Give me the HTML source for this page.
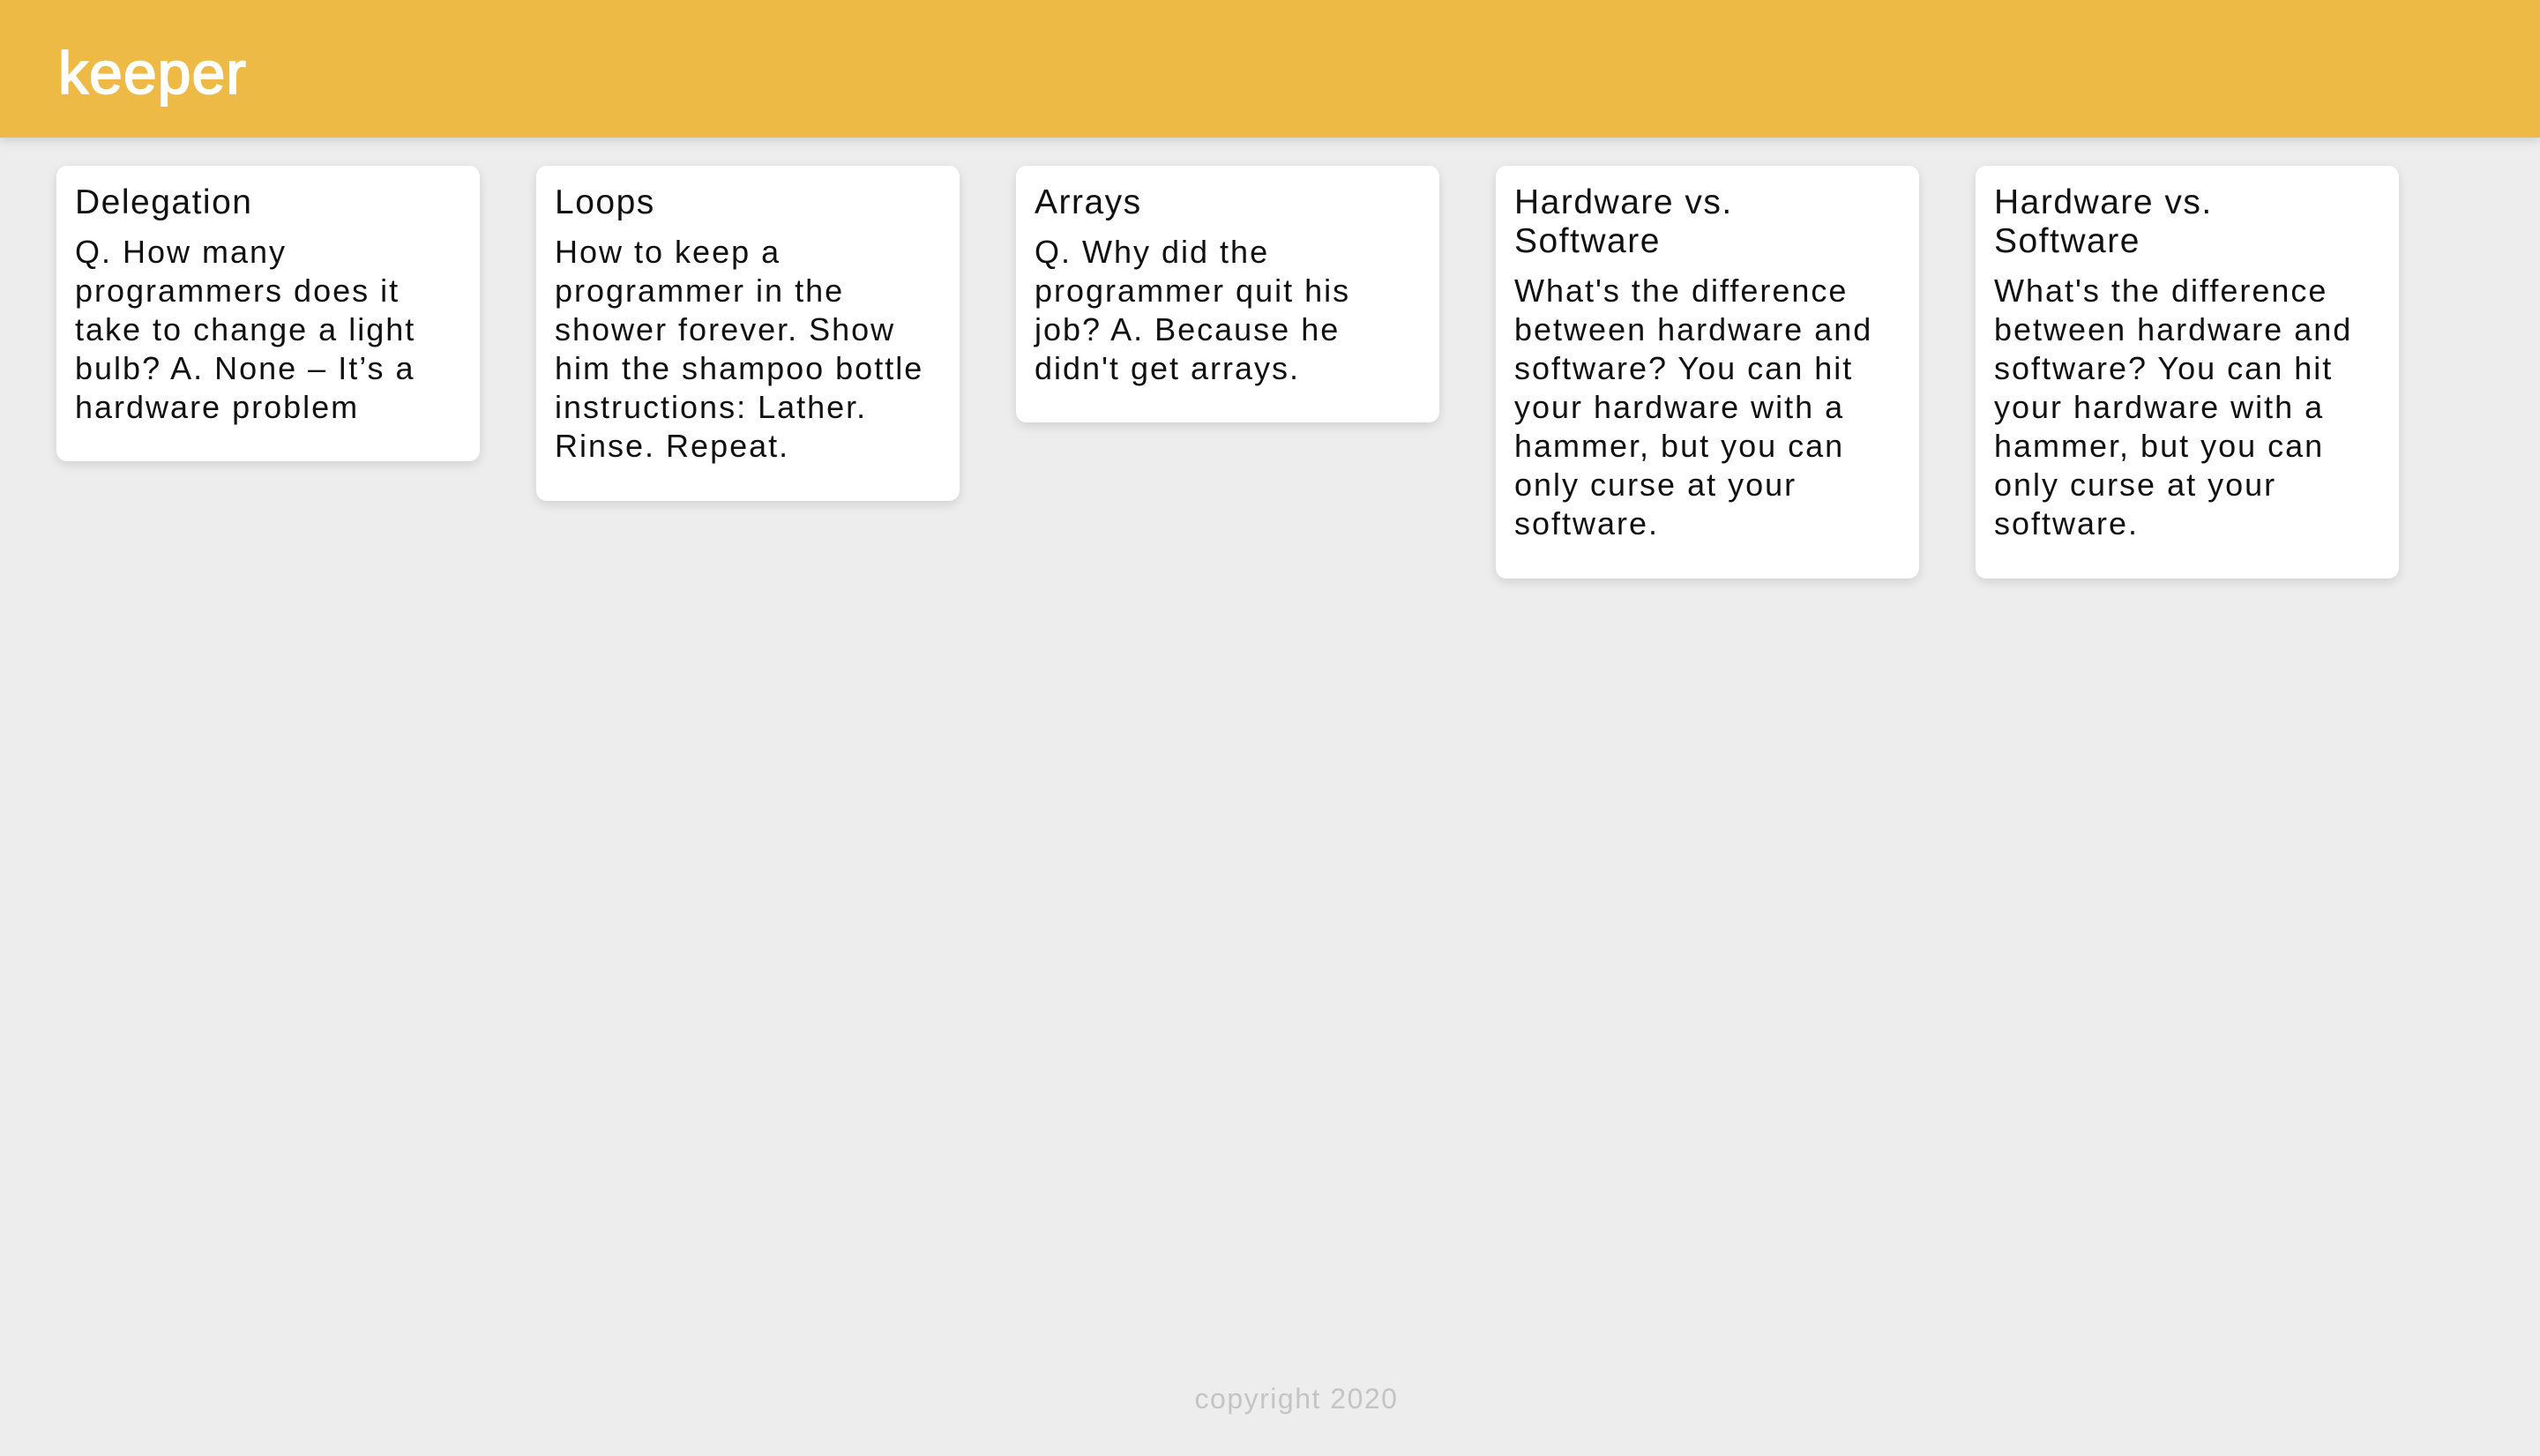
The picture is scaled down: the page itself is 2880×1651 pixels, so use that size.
<!DOCTYPE html>
<html><head><meta charset="utf-8"><style>
html,body{margin:0;padding:0}
body{width:2880px;height:1651px;background:#ededed;font-family:"Liberation Sans",sans-serif;position:relative;overflow:hidden}
.hdr{position:absolute;left:0;top:0;width:2880px;height:156px;background:#ecba45;box-shadow:0 4px 10px rgba(0,0,0,0.12)}
.logo{position:absolute;left:66px;top:38px;font-size:68px;font-weight:normal;-webkit-text-stroke:1.8px #fff;color:#fff;letter-spacing:1px;line-height:90px}
.card{position:absolute;top:188px;width:480px;background:#fff;border-radius:12px;box-shadow:0 4px 12px rgba(0,0,0,0.12);box-sizing:border-box;padding:20px 20px 0 21px;color:#111}
.t{font-size:39px;line-height:44px;letter-spacing:1.5px;margin-bottom:12px}
.b{font-size:36px;line-height:44px;letter-spacing:2px}
.foot{position:absolute;left:0;width:2940px;text-align:center;top:1568px;font-size:32px;color:#c4c4c4;letter-spacing:1.5px}
</style></head><body>
<div class="hdr"><div class="logo">keeper</div></div>
<div class="card" style="left:64px;height:335px"><div class="t">Delegation</div><div class="b">Q. How many<br>programmers does it<br>take to change a light<br>bulb? A. None – It’s a<br>hardware problem</div></div>
<div class="card" style="left:608px;height:380px"><div class="t">Loops</div><div class="b">How to keep a<br>programmer in the<br>shower forever. Show<br>him the shampoo bottle<br>instructions: Lather.<br>Rinse. Repeat.</div></div>
<div class="card" style="left:1152px;height:291px"><div class="t">Arrays</div><div class="b">Q. Why did the<br>programmer quit his<br>job? A. Because he<br>didn't get arrays.</div></div>
<div class="card" style="left:1696px;height:468px"><div class="t">Hardware vs.<br>Software</div><div class="b">What's the difference<br>between hardware and<br>software? You can hit<br>your hardware with a<br>hammer, but you can<br>only curse at your<br>software.</div></div>
<div class="card" style="left:2240px;height:468px"><div class="t">Hardware vs.<br>Software</div><div class="b">What's the difference<br>between hardware and<br>software? You can hit<br>your hardware with a<br>hammer, but you can<br>only curse at your<br>software.</div></div>
<div class="foot">copyright 2020</div>
</body></html>
